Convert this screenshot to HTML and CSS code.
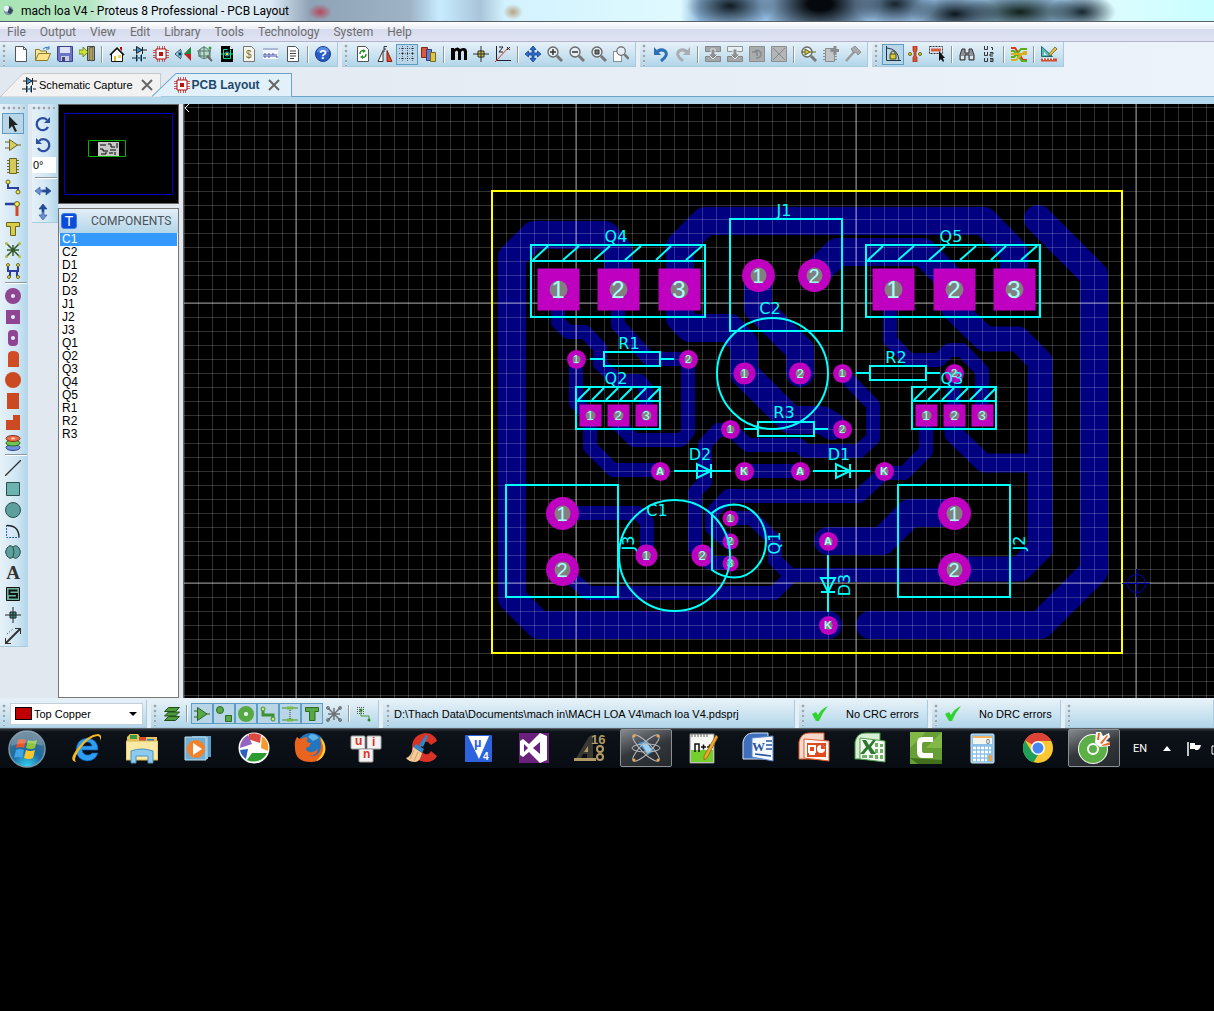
FILE: index.html
```
<!DOCTYPE html>
<html lang="en">
<head>
  <meta charset="UTF-8">
  <title>mach loa V4 - Proteus 8 Professional - PCB Layout</title>
  <link rel="stylesheet" href="styles.css">
</head>
<body>

  <header class="titlebar">
    <svg class="app-icon" viewBox="0 0 16 16"><circle cx="8" cy="8" r="5" fill="#7f93a5"/><circle cx="6" cy="6" r="3" fill="#e8f0f6"/><path d="M9 4l4 4-3 4-3-2z" fill="#34495e"/></svg>
    <h1>mach loa V4 - Proteus 8 Professional - PCB Layout</h1>
  </header>

  <nav class="menubar">
    <button>File</button><button>Output</button><button>View</button><button>Edit</button><button>Library</button><button>Tools</button><button>Technology</button><button>System</button><button>Help</button>
  </nav>

  <div class="toolbars">
    <div class="toolbar">
      <span class="grip"></span>
      <button aria-label="New"><svg viewBox="0 0 16 16"><path d="M2.500.5h8l3 3v12h-11z" fill="#fff" stroke="#555"/><path d="M10.500.5v3h3" fill="none" stroke="#555"/></svg></button>
      <button aria-label="Open"><svg viewBox="0 0 16 16"><path d="M.5 14.500v-11h4l1 1.500h6v3" fill="#f7e7a0" stroke="#8f7a2b"/><path d="M.5 14.500l3-7h12l-3 7z" fill="#ffe28a" stroke="#8f7a2b"/><path d="M8 3q3-3 6-1M14 0v3h-3" fill="none" stroke="#3b79b8"/></svg></button>
      <button aria-label="Save"><svg viewBox="0 0 16 16"><path d="M.5.5h15v15H2l-1.500-1.500z" fill="#6e74c4" stroke="#3d4288"/><path d="M3 1h10v6H3z" fill="#dfe3f5"/><path d="M4 10h8v5H4z" fill="#c9cdde"/><path d="M5 11h3v4H5z" fill="#3d4288"/></svg></button>
      <button aria-label="Close project"><svg viewBox="0 0 16 16"><path d="M8.500.5h7v14h-7z" fill="#cfcf9f" stroke="#444"/><path d="M10 2l4-1v14l-4-1z" fill="#a8a05a" stroke="#444" stroke-width=".7"/><path d="M0 4h4V1l5 5-5 5V8H0z" fill="#cde037" stroke="#5e7a16" stroke-width=".8"/></svg></button>
      <span class="sep"></span>
      <button aria-label="Home"><svg viewBox="0 0 16 16"><path d="M2.500 8v7.500h11V8L8 2.500z" fill="#fff" stroke="#111"/><path d="M1 9l7-7 7 7" fill="none" stroke="#111" stroke-width="1.500"/><path d="M5 10h2v5H5z" fill="#e8b923"/><path d="M9 9h3v3H9z" fill="#edd65d"/><path d="M11 1h2v4l-2-2z" fill="#b00"/></svg></button>
      <button aria-label="Schematic capture"><svg viewBox="0 0 16 16"><use href="#i-schematic"/></svg></button>
      <button aria-label="PCB layout"><svg viewBox="0 0 16 16"><use href="#i-chip"/></svg></button>
      <button aria-label="3D visualizer"><svg viewBox="0 0 16 16"><path d="M16 1v14L9 8z" fill="#c81e1e"/><path d="M16 1v7H9z" fill="#1c8b3c"/><path d="M0 8l6-5M0 8l6 5M6 4v8" stroke="#345" fill="none"/><circle cx="5" cy="8" r="2.500" fill="#3a9fc4"/><circle cx="5" cy="8" r="1" fill="#000"/></svg></button>
      <button aria-label="Gerber viewer"><svg viewBox="0 0 16 16"><circle cx="7" cy="7" r="5.500" fill="#b9d9cb" stroke="#55796a"/><path d="M0 5h14M7 0v13M13 2v11M3 3v8M1 10h12" stroke="#55796a" fill="none"/><circle cx="13" cy="2" r="1.500" fill="#3f9a4c"/><path d="M10 10l5 5" stroke="#666" stroke-width="2"/></svg></button>
      <button aria-label="Design explorer"><svg viewBox="0 0 16 16"><path d="M2 0h9l3 3v13H2z" fill="#000"/><path d="M11 0v3h3z" fill="#fff"/><path d="M8.500 3.500h-4v9h7v-9M2 8h4M10 8h4" stroke="#13e08a" fill="none"/><circle cx="8" cy="8" r="2" fill="#000" stroke="#13c8e0"/><path d="M7 7h2v2H7z" fill="#ffe000"/></svg></button>
      <button aria-label="Bill of materials"><svg viewBox="0 0 16 16"><path d="M2.500.5h8l3 3v12h-11z" fill="#f3f3ec" stroke="#777"/><text x="5" y="12" font-size="10" fill="#7d7020">$</text></svg></button>
      <button aria-label="VSM studio"><svg viewBox="0 0 16 16"><path d="M0 2h15v11H0z" fill="#f4f6fb"/><path d="M0 2h15v2H0z" fill="#aab9d6"/><path d="M1 8h2v3H1zM5 8h2v3H5zM9 11V8h2v3M13 8v3h2" fill="none" stroke="#4353a8"/></svg></button>
      <button aria-label="Project notes"><svg viewBox="0 0 16 16"><path d="M2.500.5h8l3 3v12h-11z" fill="#fff" stroke="#555"/><path d="M5 5h6M5 7.500h6M5 10h6M5 12.500h4" stroke="#444"/></svg></button>
      <span class="sep"></span>
      <button aria-label="Help"><svg viewBox="0 0 16 16"><circle cx="8" cy="8" r="7.500" fill="#2a5cc8" stroke="#173a8c"/><path d="M2 6a6 5 0 0 1 12 0" fill="#5b8ae6"/><text x="4" y="12.500" font-size="13" font-weight="bold" fill="#fff">?</text></svg></button>
    </div>

    <div class="toolbar">
      <span class="grip"></span>
      <button aria-label="Redraw"><svg viewBox="0 0 16 16"><path d="M2.500.5h8l3 3v12h-11z" fill="#fff" stroke="#555"/><path d="M5 8q0-4 4-3M11 8q0 4-4 3" fill="none" stroke="#2b8d2b" stroke-width="1.500"/><path d="M8 3l3 2-3 2zM8 9l-3 2 3 2z" fill="#2b8d2b"/></svg></button>
      <button aria-label="Flip"><svg viewBox="0 0 16 16"><path d="M1 15.500l5-11v11z" fill="#fff" stroke="#333"/><path d="M15 15.500l-5-11v11z" fill="#e2492e" stroke="#8a2212"/><path d="M7 6V.5h3M7 3h2" stroke="#333" fill="none"/></svg></button>
      <button class="on" aria-label="Grid"><svg viewBox="0 0 16 16"><path d="M3.500 0v16M8.500 0v16M13.500 0v16M0 2.500h16M0 7.500h16M0 12.500h16" stroke="#667" stroke-dasharray="1 1"/><path d="M3 2.500h1M8 2.500h1M13 2.500h1M3 7.500h1M8 7.500h1M13 7.500h1M3 12.500h1M8 12.500h1M13 12.500h1" stroke="#223"/></svg></button>
      <button aria-label="Layers"><svg viewBox="0 0 16 16"><path d="M.5 1.500h6v10h-6z" fill="#d9593a" stroke="#7a2b18"/><path d="M5.500 3.500h5v11h-5z" fill="#6a78c8" stroke="#333d78"/><path d="M9.500 6.500h5v9h-5z" fill="#dcc64a" stroke="#776a1c"/></svg></button>
      <span class="sep"></span>
      <button aria-label="Metric"><svg viewBox="0 0 16 16"><path d="M0 14V2h3v1q4-3 6 0 6-3 7 2v9h-3V6q-1-3-3 0v8H7V6Q6 3 4 6v8z" fill="#000"/></svg></button>
      <button aria-label="Origin"><svg viewBox="0 0 16 16"><path d="M8 0v16M0 8h16" stroke="#333"/><path d="M5 5h6v6H5z" fill="#c9bc36" stroke="#333"/><path d="M8 4v8M4 8h8" stroke="#333"/></svg></button>
      <button aria-label="Polar coordinates"><svg viewBox="0 0 16 16"><path d="M1.500 0v14.500H16" fill="none" stroke="#223"/><path d="M0 16L13 2" stroke="#d03a20"/><path d="M4 1h4L4 6h4M12 1l3 3M15 1l-3 3" stroke="#223" fill="none"/></svg></button>
      <span class="sep"></span>
      <button aria-label="Pan"><svg viewBox="0 0 16 16"><path d="M8 0l3 3.500H9V7h3.500V5L16 8l-3.500 3V9H9v3.500h2L8 16l-3-3.500h2V9H3.500v2L0 8l3.500-3v2H7V3.500H5z" fill="#2a6fd6" stroke="#133c86" stroke-width=".8"/></svg></button>
      <button aria-label="Zoom in"><svg viewBox="0 0 16 16"><use href="#i-lens"/><path d="M3 6h6M6 3v6" stroke="#333" stroke-width="1.500"/></svg></button>
      <button aria-label="Zoom out"><svg viewBox="0 0 16 16"><use href="#i-lens"/><path d="M3 6h6" stroke="#333" stroke-width="1.500"/></svg></button>
      <button aria-label="Zoom all"><svg viewBox="0 0 16 16"><use href="#i-lens"/><path d="M4 4h4v4H4z" fill="#777" stroke="#333"/></svg></button>
      <button aria-label="Zoom area"><svg viewBox="0 0 16 16"><path d="M.5 5.500h8v10h-8z" fill="#fff" stroke="#333" stroke-dasharray="1 1"/><g transform="translate(3 0) scale(.85)"><use href="#i-lens"/></g></svg></button>
    </div>

    <div class="toolbar">
      <span class="grip"></span>
      <button aria-label="Undo"><svg viewBox="0 0 16 16"><path d="M3 7q4-5 9-2 4 4-4 10" fill="none" stroke="#2d6fb5" stroke-width="3"/><path d="M1 1v8h7z" fill="#2d6fb5"/></svg></button>
      <button aria-label="Redo"><svg viewBox="0 0 16 16"><path d="M13 7Q9 2 4 5q-4 4 4 10" fill="none" stroke="#a9adb1" stroke-width="3"/><path d="M15 1v8H8z" fill="#a9adb1"/></svg></button>
      <span class="sep"></span>
      <button aria-label="Block copy"><svg viewBox="0 0 16 16"><path d="M.5.5h15v5h-15zM.5 10.500h15v5h-15z" fill="#a4a6a8" stroke="#85888a"/><path d="M6 3h4v5h3l-5 5-5-5h3z" fill="#8d9092" stroke="#e2e6e9"/></svg></button>
      <button aria-label="Block move"><svg viewBox="0 0 16 16"><path d="M.5.5h15v5h-15z" fill="#e9eef1" stroke="#929597"/><path d="M.5 10.500h15v5h-15z" fill="#a4a6a8" stroke="#85888a"/><path d="M6 3h4v5h3l-5 5-5-5h3z" fill="#8d9092" stroke="#e2e6e9"/></svg></button>
      <button aria-label="Block rotate"><svg viewBox="0 0 16 16"><path d="M.5.500h15v15H.5z" fill="#a9abad" stroke="#8b8e90"/><path d="M5 6q4-4 7 1 1 5-5 5M3 6h5v4" fill="none" stroke="#85888a" stroke-width="1.500"/></svg></button>
      <button aria-label="Block delete"><svg viewBox="0 0 16 16"><path d="M.5.500h15v15H.5z" fill="#b3b5b7" stroke="#8b8e90"/><path d="M2 2l12 12M14 2L2 14" stroke="#85888a"/></svg></button>
      <span class="sep"></span>
      <button aria-label="Pick parts"><svg viewBox="0 0 16 16"><use href="#i-lens"/><path d="M4 3l5 3-5 3z" fill="#d0c53a" stroke="#66601a"/><path d="M0 6h4M9 6h6" stroke="#66601a"/></svg></button>
      <button aria-label="Make package"><svg viewBox="0 0 16 16"><path d="M2.500 2.500h9v13h-9z" fill="#c2c4c6" stroke="#8b8e90"/><path d="M0 4.500h2M0 7.500h2M0 10.500h2M0 13.500h2M12 10.500h2M12 13.500h2" stroke="#8b8e90"/><path d="M12 0v9M7.500 4.500H16" stroke="#898c8e" stroke-width="3"/></svg></button>
      <button aria-label="Decompose"><svg viewBox="0 0 16 16"><path d="M1 15l8-9" stroke="#9a9da0" stroke-width="2.500"/><path d="M6 3l4-3 6 6-3 3-2-3-2 1z" fill="#a9acae" stroke="#7f8284" stroke-width=".8"/></svg></button>
    </div>

    <div class="toolbar">
      <span class="grip"></span>
      <button class="on" aria-label="Trace angle lock"><svg viewBox="0 0 16 16"><path d="M1.500 0v14.500H16M2 2q11 1 12 12" fill="none" stroke="#234"/><path d="M5 8h6v5H5z" fill="#d8ca3b" stroke="#554d10"/><path d="M6 8V6q2-2 4 0v2" fill="none" stroke="#554d10"/></svg></button>
      <button aria-label="Auto track necking"><svg viewBox="0 0 16 16"><path d="M6 0h4v5l-1 1v4l1 1v5H6v-5l1-1V6L6 5z" fill="#e2512e" stroke="#912a12" stroke-width=".7"/><circle cx="3" cy="8" r="1.500" fill="#e3de3a" stroke="#666212"/><circle cx="13" cy="8" r="1.500" fill="#e3de3a" stroke="#666212"/></svg></button>
      <button aria-label="Selection filter"><svg viewBox="0 0 16 16"><path d="M.5.500h13v7H.5z" fill="none" stroke="#333" stroke-dasharray="2 1"/><path d="M2 2.500h10v3H2z" fill="#d9593a"/><path d="M10 5v10l2-2 2 3 1-1-1-3h2z" fill="#111"/></svg></button>
      <span class="sep"></span>
      <button aria-label="Search"><svg viewBox="0 0 16 16"><path d="M3 3h3v4h4V3h3l2 6v5h-5V9H6v5H1V9z" fill="#8f9296" stroke="#333"/><path d="M2 10h3v3H2zM11 10h3v3h-3z" fill="#dfe5ea"/></svg></button>
      <button aria-label="Name generator"><svg viewBox="0 0 16 16"><path d="M3.500 0v3.500h3V0M10 1.500h1.500V4M3.500 6v3.500h3V6M9 6.500h3v1.500H9v2h3M3.500 12v3.500h3V12M9 12.500h3v3H9M9 14h3" fill="none" stroke="#333"/></svg></button>
      <span class="sep"></span>
      <button aria-label="Auto router"><svg viewBox="0 0 16 16"><path d="M0 2h4l8 12h4" fill="none" stroke="#da3b1c" stroke-width="2"/><path d="M0 5h3l8 10h5M0 11h3l7-8h6" fill="none" stroke="#58b010" stroke-width="2"/><path d="M0 14h5l8-8h3M0 8h16" fill="none" stroke="#d9b11c" stroke-width="2"/></svg></button>
      <span class="sep"></span>
      <button aria-label="Design rules"><svg viewBox="0 0 16 16"><path d="M.5.500v10h11z" fill="#57b8bd" stroke="#1f6a70"/><path d="M3 6v3h3z" fill="#e0eff7"/><path d="M8 8l6-7 2 2-6 6-2 1z" fill="#e6c649" stroke="#5b4a18" stroke-width=".7"/><path d="M0 12.500h16v3H0z" fill="#d9492b"/><path d="M2.500 12v2M5.500 12v2M8.500 12v2M11.500 12v2" stroke="#fff"/></svg></button>
    </div>
  </div>

  <div class="tabs">
    <div class="tab">
      <svg class="tab-shape" viewBox="0 0 162 24" preserveAspectRatio="none"><path d="M0 24L23 .5h138V24z" fill="#f2f2f2" stroke="#c4c9ce"/></svg>
      <svg class="icon" viewBox="0 0 16 16"><use href="#i-schematic"/></svg>
      <button class="tab-name">Schematic Capture</button>
      <button class="tab-close" aria-label="Close Schematic Capture"><svg viewBox="0 0 12 12"><path d="M1 1l10 10M11 1L1 11"/></svg></button>
    </div>
    <div class="tab active">
      <svg class="tab-shape" viewBox="0 0 140 25" preserveAspectRatio="none"><path d="M0 24.500L24 .5h115.500v24" fill="#e2f0f9" stroke="#6ba3c6"/></svg>
      <svg class="icon" viewBox="0 0 16 16"><use href="#i-chip"/></svg>
      <button class="tab-name">PCB Layout</button>
      <button class="tab-close" aria-label="Close PCB Layout"><svg viewBox="0 0 12 12"><path d="M1 1l10 10M11 1L1 11"/></svg></button>
    </div>
  </div>

  <main class="workspace">
    <div class="side-tools">
      <span class="grip flat"></span>
      <button class="on" aria-label="Selection"><svg viewBox="0 0 16 16"><path d="M4 0v13l3-3 3 6 2-1-3-6h4z" fill="#222"/></svg></button>
      <button aria-label="Component"><svg viewBox="0 0 16 16"><path d="M0 5h4M0 11h4M12 8h4" stroke="#6b6320"/><path d="M4.500 2.500l8 5.500-8 5.500z" fill="#d8cc62" stroke="#6b6320"/></svg></button>
      <button aria-label="Package"><svg viewBox="0 0 16 16"><path d="M4.500.5h7v15h-7z" fill="#d5c95c" stroke="#6b6320"/><path d="M2 2.500h2M2 5.500h2M2 8.500h2M2 11.500h2M2 14.500h2M12 2.500h2M12 5.500h2M12 8.500h2M12 11.500h2M12 14.500h2" stroke="#6b6320"/></svg></button>
      <button aria-label="Track"><svg viewBox="0 0 16 16"><path d="M3 3v6h10v4" fill="none" stroke="#2a3da0" stroke-width="2"/><circle cx="3" cy="3" r="2" fill="#f1ea4c" stroke="#6b6320"/><circle cx="13" cy="13" r="2" fill="#f1ea4c" stroke="#6b6320"/></svg></button>
      <button aria-label="Via"><svg viewBox="0 0 16 16"><path d="M0 4h12" stroke="#2a3da0" stroke-width="2.500"/><path d="M12 5v11" stroke="#cf4a24" stroke-width="3"/><circle cx="12" cy="4" r="2.500" fill="#f1ea4c" stroke="#6b6320"/></svg></button>
      <button aria-label="Zone"><svg viewBox="0 0 16 16"><path d="M1.500 1.500h13v4h-4v9h-5v-9h-4z" fill="#d8cc48" stroke="#6b6320"/></svg></button>
      <button aria-label="Ratsnest"><svg viewBox="0 0 16 16"><path d="M1 1l14 14M15 1L1 15M8 3v11M2 8h12" stroke="#35592b" stroke-width="1.500"/><g fill="#b4bd3b"><circle cx="1.500" cy="1.500" r="1.500"/><circle cx="14.500" cy="1.500" r="1.500"/><circle cx="1.500" cy="14.500" r="1.500"/><circle cx="14.500" cy="14.500" r="1.500"/></g></svg></button>
      <button aria-label="Connectivity"><svg viewBox="0 0 16 16"><path d="M3 2v6h10V2M5 8v6M12 8v6" fill="none" stroke="#2a3da0" stroke-width="2"/><g fill="#f1ea4c" stroke="#6b6320"><circle cx="3" cy="2" r="1.500"/><circle cx="13" cy="2" r="1.500"/><circle cx="4" cy="14" r="1.500"/><circle cx="13" cy="14" r="1.500"/></g></svg></button>
      <span class="hsep"></span>
      <button aria-label="Round pad"><svg viewBox="0 0 16 16"><circle cx="8" cy="8" r="8" fill="#8f4592"/><circle cx="8" cy="8" r="2" fill="#e6eef5"/></svg></button>
      <button aria-label="Square pad"><svg viewBox="0 0 16 16"><path d="M1 1h14v14H1z" fill="#8f4592"/><circle cx="8" cy="8" r="2" fill="#e6eef5"/></svg></button>
      <button aria-label="DIL pad"><svg viewBox="0 0 16 16"><rect x="3" width="10" height="16" rx="4" fill="#8f4592"/><circle cx="8" cy="8" r="2" fill="#e6eef5"/></svg></button>
      <button aria-label="Edge connector pad"><svg viewBox="0 0 16 16"><path d="M3 16V4q0-4 5-4 6 0 6 4v12z" fill="#d04c22"/></svg></button>
      <button aria-label="Circular SMT pad"><svg viewBox="0 0 16 16"><circle cx="8" cy="8" r="8" fill="#cb4a22"/></svg></button>
      <button aria-label="Rectangular SMT pad"><svg viewBox="0 0 16 16"><path d="M2 0h12v16H2z" fill="#cb4a22"/></svg></button>
      <button aria-label="Polygonal SMT pad"><svg viewBox="0 0 16 16"><path d="M1 16V6h7V1h7v15z" fill="#cb4a22"/></svg></button>
      <button aria-label="Padstack"><svg viewBox="0 0 16 16"><ellipse cx="8" cy="12.500" rx="7" ry="3" fill="#6f90dc" stroke="#2f4788"/><ellipse cx="8" cy="8" rx="7" ry="3" fill="#6fc552" stroke="#2e6b1c"/><ellipse cx="8" cy="3.500" rx="7" ry="3" fill="#ef6e49" stroke="#8a2f16"/><ellipse cx="8" cy="3.500" rx="2" ry="1" fill="#fbdccf"/></svg></button>
      <span class="hsep"></span>
      <button aria-label="2D line"><svg viewBox="0 0 16 16"><path d="M0 16L16 0" stroke="#333" stroke-width="1.300"/></svg></button>
      <button aria-label="2D box"><svg viewBox="0 0 16 16"><path d="M1.500 1.500h13v13h-13z" fill="#6cb3b0" stroke="#2e4f4f"/></svg></button>
      <button aria-label="2D circle"><svg viewBox="0 0 16 16"><circle cx="8" cy="8" r="7.500" fill="#5d9f9c" stroke="#2e4f4f"/></svg></button>
      <button aria-label="2D arc"><svg viewBox="0 0 16 16"><path d="M1.500 2v12.500h12" fill="none" stroke="#2263c4" stroke-dasharray="2 1"/><path d="M2 2.500q12 0 12 12" fill="none" stroke="#222" stroke-width="1.300"/></svg></button>
      <button aria-label="2D path"><svg viewBox="0 0 16 16"><path d="M8 3Q5 0 2 4q-3 4 0 8 3 4 6 1 3 3 6-1 3-4 0-8-3-4-6-1z" fill="#5d9f9c" stroke="#2e4f4f"/><path d="M8 3q2 5 0 10" fill="none" stroke="#2e4f4f"/></svg></button>
      <button class="text-tool" aria-label="2D text">A</button>
      <button aria-label="2D symbol"><svg viewBox="0 0 16 16"><path d="M1.500 1.500h13v13h-13z" fill="#6cb3a0" stroke="#111"/><path d="M12.500 4.500h-8V8h7.500v3.500H4" fill="none" stroke="#111" stroke-width="2"/></svg></button>
      <button aria-label="Marker"><svg viewBox="0 0 16 16"><path d="M8 0v16M0 8h16" stroke="#222"/><path d="M5 5h6v6H5z" fill="#3f8f89" stroke="#222"/><path d="M8 5v6M5 8h6" stroke="#222"/></svg></button>
      <button aria-label="Dimension"><svg viewBox="0 0 16 16"><path d="M1 15L15 1" stroke="#333" stroke-width="2"/><path d="M0 10v6h6M10 0h6v6" fill="none" stroke="#333" stroke-width="2"/><path d="M2 6l6-5" stroke="#333" stroke-dasharray="1 2"/></svg></button>
    </div>

    <div class="rotate-tools">
      <span class="grip flat"></span>
      <button aria-label="Rotate clockwise"><svg viewBox="0 0 16 16"><path d="M13 11a6 6 0 1 1-1-7" fill="none" stroke="#2b4f9e" stroke-width="2.300"/><path d="M15 1v6H9z" fill="#2b4f9e"/></svg></button>
      <button aria-label="Rotate anticlockwise"><svg viewBox="0 0 16 16"><path d="M3 11a6 6 0 1 0 1-7" fill="none" stroke="#2b4f9e" stroke-width="2.300"/><path d="M1 1v6h6z" fill="#2b4f9e"/></svg></button>
      <input type="text" class="angle" aria-label="Rotation angle" value="0°">
      <span class="hsep"></span>
      <button aria-label="Mirror horizontally"><svg viewBox="0 0 16 16"><path d="M0 8l5-4v3h3v2H5v3z" fill="#6d8fd0" stroke="#3c5fa8" stroke-width=".7"/><path d="M16 8l-5-4v3H8v2h3v3z" fill="#234a96" stroke="#234a96" stroke-width=".7"/></svg></button>
      <button aria-label="Mirror vertically"><svg viewBox="0 0 16 16"><path d="M8 0l4 5H9v3H7V5H4z" fill="#234a96" stroke="#234a96" stroke-width=".7"/><path d="M8 16l4-5H9V8H7v3H4z" fill="#6d8fd0" stroke="#3c5fa8" stroke-width=".7"/></svg></button>
    </div>

    <aside class="panel">
      <div class="overview">
        <svg viewBox="0 0 119 98">
          <path d="M5.500 8.500h108v81H5.500z" fill="none" stroke="#0000c8"/>
          <path d="M29.500 35.500h37v16h-37z" fill="none" stroke="#00b400"/>
          <path d="M39 37h21v14H39z" fill="#c8c8c8"/>
          <path d="M41 40h6M49 39h3v3h4M58 38v5M41 44h3v2h5M51 45h6M42 49h5v-2M50 48h4M56 47v3" fill="none" stroke="#000"/>
        </svg>
      </div>
      <div class="components">
        <div class="components-head">
          <button aria-label="Pick parts from libraries">T</button>
          <h2>COMPONENTS</h2>
        </div>
        <ul role="listbox" aria-label="Components">
          <li role="option" aria-selected="true" class="selected">C1</li>
          <li role="option">C2</li>
          <li role="option">D1</li>
          <li role="option">D2</li>
          <li role="option">D3</li>
          <li role="option">J1</li>
          <li role="option">J2</li>
          <li role="option">J3</li>
          <li role="option">Q1</li>
          <li role="option">Q2</li>
          <li role="option">Q3</li>
          <li role="option">Q4</li>
          <li role="option">Q5</li>
          <li role="option">R1</li>
          <li role="option">R2</li>
          <li role="option">R3</li>
        </ul>
      </div>
    </aside>

    <div class="canvas">
      <svg class="pcb" width="100%" height="594">
        <defs>
          <pattern id="grid" width="14" height="14" x="184" y="191" patternUnits="userSpaceOnUse">
            <path d="M.5 0v14M0 .5h14" stroke="#fff" stroke-opacity=".19" fill="none"/>
          </pattern>
          <pattern id="grid-major" width="280" height="280" x="295" y="302" patternUnits="userSpaceOnUse">
            <path d="M1 0v280M0 1h280" stroke="#fff" stroke-opacity=".28" stroke-width="2" fill="none"/>
          </pattern>
          <g id="pad-big"><path class="pad" d="M-21-21h42v42h-42z"/><circle class="hole" r="9"/></g>
          <g id="pad-sq"><path class="pad" d="M-11-11h22v22h-22z"/><circle class="hole" r="5"/></g>
          <g id="pad-conn"><circle class="pad" r="16.500"/><circle class="hole" r="8"/></g>
          <g id="pad-cap"><circle class="pad" r="11"/><circle class="hole" r="4.500"/></g>
          <g id="pad-res"><circle class="pad" r="9.500"/><circle class="hole" r="4"/></g>
          <g id="pad-to92"><circle class="pad" r="8"/><circle class="hole" r="4"/></g>
          <g id="to220">
            <path d="M0 0h174v72H0zM0 16h174M2 15L17 1M32 15L48 1M63 15L79 1M94 15l16-14M125 15l15-14M155 15L171 1"/>
          </g>
          <g id="to126">
            <path d="M0 0h84v42H0zM0 14h84M2 13L14 1M16 13L28 1M30 13L42 1M44 13L56 1M58 13L70 1M72 13L84 1"/>
          </g>
          <g id="resistor"><path d="M14 0h56v14H14zM0 7h14M70 7h14"/></g>
          <g id="diode"><path d="M0 0h57M23-7v14L37 0zM37-7V7"/></g>
        </defs>
        <g transform="translate(-184 -104)">
          <!-- bottom copper -->
          <g class="tracks">
            <g class="w28">
              <path d="M618 290V250L605 235H534L512 257V598L539 625H828"/>
              <path d="M1014 290V252L984 221H705L680 246V318L690 328H730L744 343V373L791 420H822L832 426"/>
              <path d="M758 276V308L800 350V373"/>
              <path d="M814 275L837 252H923L958 287"/>
              <path d="M1038 219L1094 275V571L1040 625H870"/>
              <path d="M828 541H882L910 513H954"/>
            </g>
            <path class="w25" d="M954 290V309L985 339H1018L1040 361V549L1020 569H954"/>
            <path class="w19" d="M954 415V434L984 463H1040"/>
            <g class="w14">
              <path d="M558 290V322L568 332H585L600 348V364L618 381H640L646 389V415"/>
              <path d="M618 290V325L649 359H688V432L681 440H634L618 424V415"/>
              <path d="M576 359V403L590 415V447L613 470H660"/>
              <path d="M702 555L695 548V492L705 482V444L718 430H730"/>
              <path d="M842 373L873 405V438L859 451H805L799 445H748L730 429"/>
              <path d="M744 471H800"/>
              <path d="M926 415V451L904 473H884L859 496H728L712 513V528L730 543"/>
              <path d="M954 373V415"/>
              <path d="M890 290V340L909 360H939L949 350H962L982 371V415"/>
              <path d="M730 518H752L775 541V560L790 575H954"/>
              <path d="M562 569L588 593H774L790 577"/>
              <path d="M562 513H638L647 522V555"/>
              <path d="M702 555L710 563H730"/>
            </g>
          </g>

          <rect x="184" y="104" width="100%" height="594" fill="url(#grid)"/>
          <rect x="184" y="104" width="100%" height="594" fill="url(#grid-major)"/>

          <!-- pads -->
          <use href="#pad-big" x="558.500" y="289.500"/><use href="#pad-big" x="618.500" y="289.500"/><use href="#pad-big" x="679.500" y="289.500"/>
          <use href="#pad-big" x="893.500" y="289.500"/><use href="#pad-big" x="954.500" y="289.500"/><use href="#pad-big" x="1014.500" y="289.500"/>
          <use href="#pad-sq" x="590.500" y="415.500"/><use href="#pad-sq" x="618.500" y="415.500"/><use href="#pad-sq" x="646.500" y="415.500"/>
          <use href="#pad-sq" x="926.500" y="415.500"/><use href="#pad-sq" x="954.500" y="415.500"/><use href="#pad-sq" x="982.500" y="415.500"/>
          <use href="#pad-conn" x="758.500" y="275.500"/><use href="#pad-conn" x="814.500" y="275.500"/>
          <use href="#pad-conn" x="562.500" y="513.500"/><use href="#pad-conn" x="562.500" y="569.500"/>
          <use href="#pad-conn" x="954.500" y="513.500"/><use href="#pad-conn" x="954.500" y="569.500"/>
          <use href="#pad-cap" x="744.500" y="373.500"/><use href="#pad-cap" x="800" y="373.500"/>
          <use href="#pad-cap" x="646.500" y="555.500"/><use href="#pad-cap" x="702.500" y="555.500"/>
          <use href="#pad-res" x="576.500" y="359.500"/><use href="#pad-res" x="688.500" y="359.500"/>
          <use href="#pad-res" x="842.500" y="373.500"/><use href="#pad-res" x="954.500" y="373.500"/>
          <use href="#pad-res" x="730.500" y="429.500"/><use href="#pad-res" x="842.500" y="429.500"/>
          <use href="#pad-res" x="660.500" y="471.500"/><use href="#pad-res" x="744.500" y="471.500"/>
          <use href="#pad-res" x="800.500" y="471.500"/><use href="#pad-res" x="884.500" y="471.500"/>
          <use href="#pad-res" x="828.500" y="541.500"/><use href="#pad-res" x="828.500" y="625.500"/>
          <use href="#pad-to92" x="730.500" y="518.500"/><use href="#pad-to92" x="730.500" y="541.500"/><use href="#pad-to92" x="730.500" y="563.500"/>

          <g class="pin pin-big">
            <text x="558" y="298">1</text><text x="618" y="298">2</text><text x="679" y="298">3</text>
            <text x="893" y="298">1</text><text x="954" y="298">2</text><text x="1014" y="298">3</text>
          </g>
          <g class="pin pin-conn">
            <text x="758" y="283">1</text><text x="814" y="283">2</text>
            <text x="562" y="521">1</text><text x="562" y="577">2</text>
            <text x="954" y="521">1</text><text x="954" y="577">2</text>
          </g>
          <g class="pin pin-small">
            <text x="590" y="420">1</text><text x="618" y="420">2</text><text x="646" y="420">3</text>
            <text x="926" y="420">1</text><text x="954" y="420">2</text><text x="982" y="420">3</text>
            <text x="744" y="378">1</text><text x="800" y="378">2</text>
            <text x="646" y="560">1</text><text x="702" y="560">2</text>
          </g>
          <g class="pin pin-tiny">
            <text x="576" y="363">1</text><text x="688" y="363">2</text>
            <text x="842" y="377">1</text><text x="954" y="377">2</text>
            <text x="730" y="433">1</text><text x="842" y="433">2</text>
            <text x="730" y="522">1</text><text x="730" y="545">2</text><text x="730" y="567">3</text>
          </g>
          <g class="pin pin-diode">
            <text x="660" y="475">A</text><text x="744" y="475">K</text>
            <text x="800" y="475">A</text><text x="884" y="475">K</text>
            <text x="828" y="545">A</text><text x="828" y="629">K</text>
          </g>

          <!-- silkscreen -->
          <g class="silk">
            <use href="#to220" x="531" y="245"/>
            <use href="#to220" x="866" y="245"/>
            <use href="#to126" x="576" y="387"/>
            <use href="#to126" x="912" y="387"/>
            <rect x="730" y="219" width="112" height="112"/>
            <rect x="506" y="485" width="112" height="112"/>
            <rect x="898" y="485" width="112" height="112"/>
            <circle cx="772.500" cy="373.500" r="55.500"/>
            <circle cx="674.500" cy="555.500" r="55.500"/>
            <use href="#resistor" x="590" y="352"/>
            <use href="#resistor" x="856" y="366"/>
            <use href="#resistor" x="744" y="422"/>
            <use href="#diode" x="674" y="471"/>
            <use href="#diode" x="813" y="471"/>
            <use href="#diode" transform="translate(828 555) rotate(90)"/>
            <path d="M712 513Q721 505 734 504.500A32 36.500 0 0 1 734 577.500Q721 577 712 570z"/>
          </g>
          <g class="ref">
            <text x="616" y="242">Q4</text>
            <text x="951" y="242">Q5</text>
            <text x="784" y="216">J1</text>
            <text x="770" y="314">C2</text>
            <text x="629" y="349">R1</text>
            <text x="896" y="363">R2</text>
            <text x="616" y="384">Q2</text>
            <text x="952" y="384">Q3</text>
            <text x="784" y="418">R3</text>
            <text x="700" y="460">D2</text>
            <text x="839" y="460">D1</text>
            <text x="657" y="516">C1</text>
            <text transform="translate(634 543) rotate(-90)">J3</text>
            <text transform="translate(780 543) rotate(-90)">Q1</text>
            <text transform="translate(1025 543) rotate(-90)">J2</text>
            <text transform="translate(850 585) rotate(-90)">D3</text>
          </g>

          <rect class="board-edge" x="492" y="191" width="630" height="462"/>
          <g class="origin"><circle cx="1136.500" cy="583.500" r="9"/><path d="M1136.500 569v28M1122 583.500h28"/></g>
          <path d="M189 104l-4 4 4 4" fill="none" stroke="#fff"/>
        </g>
      </svg>
    </div>
  </main>

  <footer class="statusbar">
    <div class="toolbar">
      <span class="grip"></span>
      <label class="layer">
        <span class="swatch"></span>
        <select aria-label="Layer"><option>Top Copper</option></select>
        <svg viewBox="0 0 8 4"><path d="M0 0h8L4 4z" fill="#000"/></svg>
      </label>
    </div>
    <div class="toolbar">
      <span class="grip"></span>
      <button aria-label="Layer pairs"><svg viewBox="0 0 16 16"><g fill="#4e9a3d" stroke="#22501a"><path d="M4.500 10.500h11l-4 4H.5z"/><path d="M4.500 6h11l-4 4H.5z"/><path d="M4.500 1.500h11l-4 4H.5z"/></g></svg></button>
      <span class="sep"></span>
      <button class="on" aria-label="Filter components"><svg viewBox="0 0 16 16"><path d="M0 5h3M0 11h3M12 8h4M3.500 1.500v13L13 8z" fill="#57a946" stroke="#2d5c27"/></svg></button>
      <button class="on" aria-label="Filter graphics"><svg viewBox="0 0 16 16"><g fill="#57a946" stroke="#2d6a22"><circle cx="4" cy="4" r="3.500"/><path d="M9.500 9.500h6v6h-6z"/></g></svg></button>
      <button class="on" aria-label="Filter pads"><svg viewBox="0 0 16 16"><circle cx="8" cy="8" r="5" fill="none" stroke="#57a946" stroke-width="6"/><circle cx="8" cy="8" r="2" fill="#e6f2e2"/></svg></button>
      <button class="on" aria-label="Filter tracks"><svg viewBox="0 0 16 16"><path d="M3 3v6h10v4" fill="none" stroke="#3f8f33" stroke-width="3"/><circle cx="3" cy="3" r="2" fill="#c5e88b" stroke="#3f8f33"/><circle cx="13" cy="13" r="2" fill="#c5e88b" stroke="#3f8f33"/></svg></button>
      <button class="on" aria-label="Filter vias"><svg viewBox="0 0 16 16"><path d="M0 2h16M0 14h16" stroke="#3f8f33"/><path d="M5 2h6M5 14h6" stroke="#76bd3c" stroke-width="3"/><path d="M8 4v9" stroke="#333" stroke-dasharray="1 1"/></svg></button>
      <button class="on" aria-label="Filter zones"><svg viewBox="0 0 16 16"><path d="M1.500 1.500h13v4h-3.500v9H5.500v-9h-4z" fill="#57a946" stroke="#2d6a22"/></svg></button>
      <button aria-label="Filter ratsnest"><svg viewBox="0 0 16 16"><path d="M1 1l14 14M15 1L1 15M8 2v12M2 8h12" stroke="#6f7376" stroke-width="1.500"/><g fill="none" stroke="#6f7376"><circle cx="2" cy="2" r="1.500"/><circle cx="14" cy="2" r="1.500"/><circle cx="2" cy="14" r="1.500"/><circle cx="14" cy="14" r="1.500"/></g></svg></button>
      <span class="sep"></span>
      <button aria-label="Auto snap"><svg viewBox="0 0 16 16"><path d="M1 1.500h8M1 3.500h8M1 5.500h8M1 7.500h8" stroke="#555" stroke-dasharray="1 1"/><path d="M5 4v6h8v4" fill="none" stroke="#3f9a33"/><circle cx="5" cy="4" r="1.500" fill="#2a8a20"/><circle cx="13" cy="14" r="1.500" fill="#2a8a20"/></svg></button>
    </div>
    <div class="toolbar path"><span class="grip"></span><span>D:\Thach Data\Documents\mach in\MACH LOA V4\mach loa V4.pdsprj</span></div>
    <div class="toolbar check">
      <span class="grip"></span>
      <svg viewBox="0 0 16 16"><path d="M0 8l4-2 2 3q3-6 10-9Q10 7 7 15H4z" fill="#2fd32f"/></svg>
      <span>No CRC errors</span>
    </div>
    <div class="toolbar check">
      <span class="grip"></span>
      <svg viewBox="0 0 16 16"><path d="M0 8l4-2 2 3q3-6 10-9Q10 7 7 15H4z" fill="#2fd32f"/></svg>
      <span>No DRC errors</span>
    </div>
    <div class="toolbar rest"><span class="grip"></span></div>
  </footer>

  <nav class="taskbar">
    <button class="start" aria-label="Start"><svg viewBox="0 0 38 38"><circle cx="19" cy="19" r="18" fill="url(#g-orb)" stroke="#7d96a5" stroke-width="1.500"/><path d="M10 10q4-2 8 0l-2 8q-4-2-8 0z" fill="#e8562a"/><path d="M20 10q4 2 9 0l-2 8q-4 2-9 0z" fill="#8cc63f"/><path d="M8 20q4-2 8 0l-2 8q-4-2-8 0z" fill="#3ea5e6"/><path d="M18 20q4 2 9 0l-2 8q-4 2-9 0z" fill="#fcc62e"/><path d="M3 16a16 15 0 0 1 32 0q-16-6-32 0z" fill="#fff" opacity=".22"/></svg></button>
    <button aria-label="Internet Explorer"><svg viewBox="0 0 32 32"><path d="M28 18H12q1 5 6 5 3 0 4-2h6q-3 8-11 8-10-1-11-11Q7 7 17 6q11 1 11 12zM12 14h10q-1-4-5-4t-5 4z" fill="#2f9df0" stroke="#0c58b0" stroke-width=".7"/><path d="M6 30Q-2 29 7 17 18 2 28 2q5 1 2 7 1-5-3-5-8 1-17 13-7 10-4 13z" fill="#f5b820"/></svg></button>
    <button aria-label="Explorer"><svg viewBox="0 0 32 32"><path d="M1 5l3-3h8l2 3h17v20H1z" fill="#e8c45e"/><path d="M4 3h7v4H4z" fill="#3d9a42"/><path d="M13 5h7v4h-7z" fill="#d34a2c"/><path d="M21 7h7v4h-7z" fill="#2a86c9"/><path d="M0 9h32v19H0z" fill="#fae9a4" stroke="#d8b650"/><path d="M5 31V19q11-4 22 0v12h-5v-7H10v7z" fill="#8ccaf0" stroke="#4d92be"/></svg></button>
    <button aria-label="Media Player"><svg viewBox="0 0 32 32"><path d="M10 4h19v21H10z" fill="#5c9dc7"/><path d="M7 5h19v22H7z" fill="#8abfe0"/><path d="M3 5h21v23H3z" fill="#74aed2" stroke="#bfe0f2"/><circle cx="14" cy="17" r="9" fill="#f5822a"/><path d="M11 11l9 6-9 6z" fill="#fff"/></svg></button>
    <button aria-label="Picasa"><svg viewBox="0 0 32 32"><circle cx="16" cy="16" r="15.500" fill="#fff"/><path d="M11 2a15 15 0 0 1 12 1l-1 8-12-4z" fill="#de4a42"/><path d="M24 4a15 15 0 0 1 6 15l-7-3z" fill="#f49a2c"/><path d="M29 21A15 15 0 0 1 9 28l5-7z" fill="#2c9c30"/><path d="M8 27a14 14 0 0 1-6-9l8-1z" fill="#2a62c0"/><path d="M2 16A15 15 0 0 1 10 3l4 9z" fill="#9664bf"/></svg></button>
    <button aria-label="Firefox"><svg viewBox="0 0 32 32"><circle cx="17" cy="15" r="14" fill="#2176bf"/><path d="M17 2q5 0 8 4l-6 3-5-4z" fill="#5bb4e4"/><path d="M3 5q2 2 4 2 4-3 7-1-2 2-1 4l4 1-2 4q-5 0-2 4 6 3 11-2-1 7-9 7 12 1 12-11 0-5-3-8 8 6 7 13-2 12-14 12Q1 30 1 16 0 9 3 5z" fill="#e8641f"/><path d="M26 5q7 7 5 15-3 8-9 9 8-7 7-15z" fill="#fbcb30"/></svg></button>
    <button aria-label="Unikey"><svg viewBox="0 0 32 32"><g fill="#f3f3f3" stroke="#a3a3a3"><rect x="1" y="4" width="14" height="13" rx="1"/><rect x="17" y="4" width="14" height="13" rx="1"/><rect x="9" y="17" width="14" height="13" rx="1"/></g><g font-size="12" font-weight="bold" fill="#e0302a"><text x="5" y="13">u</text><text x="22" y="14">i</text><text x="13" y="26">n</text></g></svg></button>
    <button aria-label="CCleaner"><svg viewBox="0 0 32 32"><path d="M31 9q-3-8-12-8Q6 3 6 16t14 14q8 0 11-6l-6-5q-2 4-6 3-5-2-4-7 2-6 7-5l3 3z" fill="#d93226"/><path d="M20 3l2 1-5 11-4-2z" fill="#2d88c9"/><path d="M10 12l8 5-2 4-9-6z" fill="#2d88c9"/><path d="M7 15l9 6q-2 9-7 9-6 0-9-4 6-2 7-11z" fill="#f5cb9a"/><path d="M8 18l-4 9M12 20l-4 9" stroke="#d39e61"/></svg></button>
    <button aria-label="Keil uVision4"><svg viewBox="0 0 32 32"><rect x="3" y="3" width="27" height="27" rx="1" fill="#2d63dc"/><path d="M6 4h21L17 27z" fill="#fff"/><g fill="#2d63dc" font-weight="bold"><text x="12" y="15" font-size="13">µ</text><text x="21" y="28" font-size="10" fill="#fff">4</text></g></svg></button>
    <button aria-label="Visual Studio"><svg viewBox="0 0 32 32"><path d="M1 1h30v30H1z" fill="#6a217b"/><path d="M22 1l7 3v24l-7 3-11-11-6 5-3-2V9l3-2 6 5zM6 12v8l4-4zM22 10l-7 6 7 6z" fill="#fff" fill-rule="evenodd"/></svg></button>
    <button aria-label="Arduino 16"><svg viewBox="0 0 32 32"><path d="M1 28l13-22q2-3 5-3v25h-6v-6H9l-3 6z" fill="#3a3833"/><path d="M0 26h22v3H0zM10 20l4-6v6z" fill="#b29a66"/><g fill="#b29a66"><text x="17" y="12" font-size="13" font-weight="bold">16</text></g><circle cx="26" cy="17" r="3" fill="none" stroke="#b29a66" stroke-width="2"/><circle cx="26" cy="25" r="3" fill="none" stroke="#b29a66" stroke-width="2"/></svg></button>
    <button class="open" aria-label="Proteus"><svg viewBox="0 0 32 32"><path d="M8 11l7-2 9 10-6 4z" fill="#3f8fd0"/><path d="M12 13l5-2 5 7-5 3z" fill="#9ed0f2"/><g fill="none" stroke="#b9bdc0"><ellipse cx="16" cy="16" rx="18" ry="5" transform="rotate(45 16 16)"/><ellipse cx="16" cy="16" rx="18" ry="5" transform="rotate(-45 16 16)"/><ellipse cx="16" cy="16" rx="14" ry="4"/></g><g fill="#eda94a"><circle cx="4" cy="4" r="1.500"/><circle cx="28" cy="4" r="1.500"/><circle cx="4" cy="28" r="1.500"/><circle cx="28" cy="28" r="1.500"/></g></svg></button>
    <button aria-label="Notepad++"><svg viewBox="0 0 32 32"><path d="M4 2h24v29H4z" fill="#f7f9f4" stroke="#888"/><path d="M5 18h22v12H5z" fill="#74cf2c"/><path d="M6 2v3M9 2v3M12 2v3M15 2v3M18 2v3M21 2v3" stroke="#666"/><path d="M9 20v-8h4v8M15 15h5M17.500 12.500v5M21 15h5M23.500 12.500v5" stroke="#111" fill="none" stroke-width="1.500"/><path d="M30 3l2 2-11 21-3 2v-4z" fill="#f0a826" stroke="#8c5b12" stroke-width=".7"/></svg></button>
    <button aria-label="Word"><svg viewBox="0 0 32 32"><path d="M1 27V10q2-9 10-9h15v26z" fill="#3d6fbd" stroke="#d6e4f7"/><path d="M10 6l21-2v25L10 25z" fill="#f5f9ff" stroke="#5b87c8"/><path d="M24 9h6M24 13h6M24 17h6M13 22l16 2" stroke="#2a5699" stroke-width="1.500"/><text class="serif" x="10" y="19" font-size="13" font-weight="bold" fill="#2a5699">W</text></svg></button>
    <button aria-label="PowerPoint"><svg viewBox="0 0 32 32"><path d="M1 27V10q2-9 10-9h15v26z" fill="#f3d8cb" stroke="#e0592b"/><path d="M6 7l25 2v20L6 26z" fill="#fff6f0" stroke="#e0592b"/><path d="M9 11h19v14H9z" fill="#e04b1e"/><circle cx="23" cy="17" r="4" fill="#fff"/><path d="M23 17v-4a4 4 0 0 1 4 4z" fill="#e04b1e"/><path d="M11 14h6v6h-6zM11 22h6" stroke="#fff" fill="none" stroke-width="2"/></svg></button>
    <button aria-label="Excel"><svg viewBox="0 0 32 32"><path d="M1 27V10q2-9 10-9h15v26z" fill="#d9eed3" stroke="#3f9440"/><path d="M6 6l25 3v21L6 27z" fill="#f7fcf4" stroke="#4c9e4a"/><path d="M21 11h3v4h-3zM26 12h3v3h-3zM21 17h3v4h-3zM26 17h3v4h-3zM8 23h5v3H8zM15 23h4v3h-4zM21 23h3v4h-3zM26 23h3v4h-3z" fill="#6fb164"/><path d="M8 8h4l3 5 4-5h3l-5 7 5 7h-5l-3-5-4 5H6l6-7z" fill="#2b7a2e"/></svg></button>
    <button aria-label="Camtasia"><svg viewBox="0 0 32 32"><path d="M0 0h32v32H0z" fill="#669f35"/><path d="M0 0h16L0 16zM16 16L32 0v16z" fill="#82b846"/><path d="M0 26l8 6h24v-4z" fill="#416f1c"/><path d="M23 5v5h-9q-2 0-2 2v7q0 2 2 2h9v5H13q-6 0-6-6V11q0-6 6-6z" fill="#fff"/></svg></button>
    <button aria-label="Calculator"><svg viewBox="0 0 32 32"><rect x="5" y="2" width="23" height="29" rx="1" fill="#8cc0e8" stroke="#cfe6f7"/><path d="M7 5h19v7H7z" fill="#f4f7ee"/><path d="M7 4h19v2H7z" fill="#f0b263"/><text x="20" y="12" font-size="7" fill="#345">0</text><g stroke="#fff" stroke-width="2.500" stroke-dasharray="3 1"><path d="M7 16h18M7 20h18M7 24h14M7 28h14"/></g><path d="M23 23h3v6h-3z" fill="#f0a33d"/></svg></button>
    <button aria-label="Chrome"><svg viewBox="0 0 32 32"><circle cx="16" cy="16" r="15" fill="#fbc832"/><path d="M16 16L3 8.500A15 15 0 0 1 29.500 9H16z" fill="#dd4437"/><path d="M3 8.500L10 20l6 3-4.500 7.500A15 15 0 0 1 3 8.500z" fill="#1fa05a"/><circle cx="16" cy="16" r="7" fill="#fff"/><circle cx="16" cy="16" r="5.500" fill="#4688f1"/></svg></button>
    <button class="open" aria-label="Coc Coc"><svg viewBox="0 0 32 32"><circle cx="15" cy="17" r="15" fill="#fff"/><circle cx="15" cy="17" r="10" fill="none" stroke="#5cae46" stroke-width="8"/><circle cx="15" cy="17" r="4" fill="#5cae46"/><path d="M17 11L18 0h5l2 4 6-3 1 4-4 4 4 1v4l-10 1z" fill="#fff"/><path d="M19 8l1-7h2l-1 7zM22 11l7-8 1 1-6 8zM24 13l8-3v3l-8 1z" fill="#f0672a"/></svg></button>
    <div class="tray">
      <span>EN</span>
      <svg viewBox="0 0 8 5"><path d="M0 5l4-5 4 5z" fill="#fff"/></svg>
      <svg class="flag" viewBox="0 0 14 14"><path d="M1 0v14" stroke="#fff" stroke-width="1.500"/><path d="M3 1h5v2h6l-1 3-2 2H8V7H3z" fill="#fff"/></svg>
      <svg class="battery" viewBox="0 0 8 14"><path d="M3 2h5v10H1V4h7M4 5v6" fill="none" stroke="#fff"/></svg>
    </div>
  </nav>

  <!-- shared icon shapes -->
  <svg class="sprite">
    <defs>
      <radialGradient id="g-orb" cx=".5" cy="1" r=".9"><stop offset="0" stop-color="#37d5f5"/><stop offset=".5" stop-color="#1b6ba3"/><stop offset="1" stop-color="#4b6f87"/></radialGradient>
      <g id="i-schematic"><path d="M2 4h3M11 4h5M11.500 1v7M1 12h4M7 12h3M12 12h3M5.500 8.500v7M10.500 8.500v7" stroke="#222" fill="none"/><path d="M5.500.5v7L11 4z" fill="#3390cc" stroke="#222"/><path d="M6 9h1v6H6zM9 9h1v6H9z" fill="#3390cc"/></g>
      <g id="i-chip"><path d="M0 4.500h16M0 6.500h16M0 9.500h16M0 11.500h16M4.500 0v16M6.500 0v16M9.500 0v16M11.500 0v16" stroke="#c33" stroke-width=".8"/><path d="M3 3h10v10H3z" fill="#fff" stroke="#a11"/><path d="M6 6h4v4H6z" fill="#b11"/></g>
      <g id="i-lens"><path d="M10 10l5 5" stroke="#777" stroke-width="3"/><circle cx="6" cy="6" r="5" fill="#e4eff5" stroke="#666" stroke-width="1.300"/></g>
    </defs>
  </svg>

</body>
</html>
```
FILE: styles.css
```
* {
  box-sizing: border-box;
}

body {
  margin: 0;
  background: #000;
  font-family: 'Liberation Sans', Arial, sans-serif;
  font-size: 11px;
  color: #000;
  overflow-x: hidden;
}

button {
  border: none;
  background: none;
  padding: 0;
  font: inherit;
  color: inherit;
}

svg {
  display: block;
  flex: none;
}

svg text {
  font-family: 'Liberation Sans', Arial, sans-serif;
}

svg text.serif {
  font-family: 'Liberation Serif', serif;
}

.sprite {
  width: 0;
  height: 0;
}

/* title bar */
.titlebar {
  display: flex;
  align-items: center;
  gap: 5px;
  height: 22px;
  padding-left: 1px;
  border-bottom: 1px solid #555f69;
  background:
    radial-gradient(ellipse 12px 8px at 320px 12px, #b5495c, transparent),
    radial-gradient(ellipse 10px 8px at 513px 12px, #b9a483, transparent),
    radial-gradient(ellipse 44px 22px at 730px 6px, #101a22, transparent),
    radial-gradient(ellipse 60px 34px at 820px 4px, #05090d 20%, transparent),
    radial-gradient(ellipse 40px 22px at 895px 4px, #16222c, transparent),
    radial-gradient(ellipse 44px 20px at 955px 14px, #0c161c, transparent),
    radial-gradient(ellipse 60px 20px at 1020px 12px, #102019, transparent),
    radial-gradient(ellipse 34px 18px at 1082px 12px, #15252e, transparent),
    linear-gradient(90deg, #a9e5b4 0, #b6e6c4 90px, #e3f3f6 120px, #dceaf5 270px, #8fa3b6 310px, #9fb3c6 410px, #c8ecff 440px, #a9c4d8 480px, #d3f2ff 505px, #dffaff 680px, #8fb9df 700px, #a6cff5 1060px, #dcfcff 1110px, #c9ffff);
}

.titlebar h1 {
  margin: 0;
  font: 12px Roboto, 'Segoe UI', sans-serif;
}

.app-icon {
  width: 15px;
  height: 15px;
}

/* menu */
.menubar {
  display: flex;
  gap: 14px;
  height: 20px;
  padding: 0 7px;
  border-bottom: 1px solid #b3b3cc;
  background: linear-gradient(#fff, #eceef6 35%, #d7dcee 36%, #dfe3f3);
}

.menubar button {
  font: 12px Roboto, 'Segoe UI', sans-serif;
  color: #6d6d6d;
}

/* toolbars */
.toolbars {
  display: flex;
  gap: 4px;
  padding: 0 0 6px;
  background: linear-gradient(90deg, #e1e8f0, #ecf3fa);
}

.toolbar {
  display: flex;
  align-items: center;
  height: 25px;
  padding-right: 3px;
  border-right: 1px solid #a9cbe0;
  border-bottom: 1px solid #a9cbe0;
  background: linear-gradient(#e6f1f8, #cde4f1 50%, #b2d6ea);
}

.grip {
  flex: none;
  width: 10px;
  height: 22px;
  margin-top: 2px;
  background: radial-gradient(circle at 4px 2px, #94a7b5 1px, #fff 2px, transparent 2px) 0 0 / 10px 5px;
}

.grip.flat {
  width: 25px;
  height: 7px;
  margin: 1px 0;
  background: radial-gradient(circle at 2px 3px, #94a7b5 1px, #fff 2px, transparent 2px) 0 0 / 5px 7px;
}

.toolbar button {
  display: grid;
  place-items: center;
  flex: none;
  width: 22px;
  height: 21px;
  border: 1px solid transparent;
}

.toolbar button svg,
.side-tools svg,
.rotate-tools svg {
  width: 16px;
  height: 16px;
}

.toolbar button.on,
.side-tools button.on {
  border: 1px solid #5f9cc4;
  background: #b9d6e8;
}

.sep {
  flex: none;
  width: 2px;
  height: 17px;
  margin: 0 3px;
  border-left: 1px solid #8d979f;
  border-right: 1px solid #fff;
}

.hsep {
  width: 22px;
  height: 2px;
  margin: 1px 0 1px 3px;
  border-top: 1px solid #8d979f;
  border-bottom: 1px solid #fff;
}

/* document tabs */
.tabs {
  display: flex;
  padding-bottom: 7px;
  background: linear-gradient(transparent 23px, #6ba3c6 23px, #6ba3c6 24px, #b5d8ec 24px), linear-gradient(90deg, #e1e8f0, #ecf3fa);
}

.tab {
  position: relative;
  display: flex;
  align-items: center;
  height: 24px;
  padding: 0 9px 0 21px;
}

.tab.active {
  margin-left: -10px;
  padding: 0 12px 0 22px;
  color: #1d4a6b;
  font-size: 12px;
  font-weight: bold;
}

.tab > * {
  position: relative;
}

.tab .tab-shape {
  position: absolute;
  inset: 0;
  width: 100%;
  height: 100%;
}

.tab .icon {
  width: 16px;
  height: 16px;
  margin-right: 2px;
}

.tab-close {
  margin-left: 8px;
}

.tab-close svg {
  width: 12px;
  height: 12px;
  stroke: #666;
  stroke-width: 2;
}

/* workspace */
.workspace {
  display: flex;
  align-items: stretch;
  background: #e1e8ef;
}

.side-tools,
.rotate-tools {
  display: flex;
  flex-direction: column;
  flex: none;
  align-self: flex-start;
  border-bottom: 1px solid #a9cbe0;
  background: linear-gradient(90deg, #e6f1f8, #d0e6f3 60%, #b2d6ea);
}

.side-tools {
  width: 28px;
  padding-left: 2px;
}

.rotate-tools {
  width: 26px;
  margin-left: 4px;
}

.side-tools button,
.rotate-tools button {
  display: grid;
  place-items: center;
  width: 22px;
  height: 21px;
  border: 1px solid transparent;
}

.side-tools .text-tool {
  color: #333;
  font: bold 19px 'Liberation Serif', serif;
  line-height: 19px;
}

.angle {
  width: 24px;
  height: 16px;
  margin: 2px 0 3px;
  padding: 0 1px;
  border: none;
  background: #fff;
  font: inherit;
}

.panel {
  display: flex;
  flex-direction: column;
  flex: none;
  gap: 4px;
  width: 121px;
}

.overview {
  height: 100px;
  border: 1px solid #666;
  background: #000;
}

.overview svg {
  width: 119px;
  height: 98px;
}

.components {
  flex: 1;
  border: 1px solid #777;
  background: #fff;
}

.components-head {
  display: flex;
  align-items: center;
  height: 24px;
  padding-left: 2px;
  background: linear-gradient(#e2eff7, #cbe2f0 50%, #b4d6e9);
}

.components-head button {
  width: 16px;
  height: 16px;
  border: 1px solid #3e7de0;
  border-radius: 3px;
  background: #0a4bd8;
  color: #fff;
  font-size: 14px;
  line-height: 14px;
}

.components-head h2 {
  margin: 0 0 0 14px;
  font: 12px Roboto, 'Segoe UI', sans-serif;
  color: #4b535a;
}

.components ul {
  margin: 0;
  padding: 0 1px;
  list-style: none;
  font-size: 12px;
  line-height: 13px;
}

.components li {
  padding-left: 2px;
}

.components li.selected {
  background: #3399ff;
  color: #fff;
}

.canvas {
  flex: 1;
  min-width: 0;
  margin-left: 4px;
  border-left: 1px solid #666;
  background: #000;
}

/* board drawing */
.tracks path {
  fill: none;
  stroke: #000080;
  stroke-linecap: round;
  stroke-linejoin: round;
}

.w28 { stroke-width: 28; }
.w25 { stroke-width: 25; }
.w19 { stroke-width: 19; }
.w14 { stroke-width: 14; }

.pad { fill: #c000c0; }
.hole { fill: #808080; }

.silk {
  fill: none;
  stroke: #00ffff;
  stroke-width: 2;
}

.pcb .ref text {
  fill: #00ffff;
  font: 16px 'DejaVu Sans', sans-serif;
  text-anchor: middle;
}

.pin {
  fill: #a8ffff;
  text-anchor: middle;
}

.pin-big { font-size: 24px; }
.pin-conn { font-size: 20px; }
.pin-small { font-size: 13px; }
.pin-tiny { font-size: 11px; }
.pin-diode { font-size: 11px; font-weight: bold; }

.board-edge {
  fill: none;
  stroke: #ffff00;
  stroke-width: 2;
}

.origin {
  fill: none;
  stroke: #0000b4;
}

/* status bar */
.statusbar {
  display: flex;
  gap: 4px;
  padding-top: 2px;
  border-bottom: 1px solid #5a6066;
  background: #e6eef6;
}

.statusbar .toolbar {
  height: 28px;
}

.layer {
  display: flex;
  align-items: center;
  width: 133px;
  height: 22px;
  padding: 0 5px 0 4px;
  border: 1px solid #c3d0da;
  background: #fff;
}

.layer .swatch {
  width: 17px;
  height: 13px;
  border: 1px solid #000;
  background: #c00000;
}

.layer select {
  flex: 1;
  min-width: 0;
  padding: 0 2px;
  border: none;
  background: none;
  appearance: none;
  font: inherit;
}

.layer svg {
  width: 8px;
  height: 4px;
}

.path {
  flex: 0 1 412px;
  padding-left: 1px;
  white-space: nowrap;
}

.check {
  flex: 0 1 129px;
  gap: 18px;
  white-space: nowrap;
}

.check .grip {
  margin-right: -15px;
}

.check svg {
  width: 16px;
  height: 16px;
}

.rest {
  flex: 1;
}

/* windows taskbar */
.taskbar {
  display: flex;
  height: 39px;
  background: linear-gradient(#2b3138, #0d1218 3px, #080d13);
}

.taskbar button {
  display: grid;
  place-items: center;
  flex: none;
  width: 52px;
  height: 38px;
  margin: 0 2px;
  border: 1px solid transparent;
  border-radius: 2px;
}

.taskbar button svg {
  width: 32px;
  height: 32px;
}

.taskbar .start {
  width: 54px;
  margin-left: 0;
  margin-right: 4px;
}

.taskbar .start svg {
  width: 38px;
  height: 38px;
}

.taskbar button.open {
  border-color: #8b9095;
  background: linear-gradient(160deg, #85898d, #34383c 50%, #24282c);
}

.tray {
  display: flex;
  flex: 1;
  align-items: center;
  gap: 16px;
  min-width: 0;
  padding-left: 11px;
  overflow: hidden;
  color: #fff;
  font: 11px Roboto, 'Segoe UI', sans-serif;
}

.tray svg {
  width: 8px;
  height: 5px;
}

.tray .flag {
  width: 14px;
  height: 14px;
}

.tray .battery {
  width: 8px;
  height: 14px;
  margin-left: -6px;
}
```
